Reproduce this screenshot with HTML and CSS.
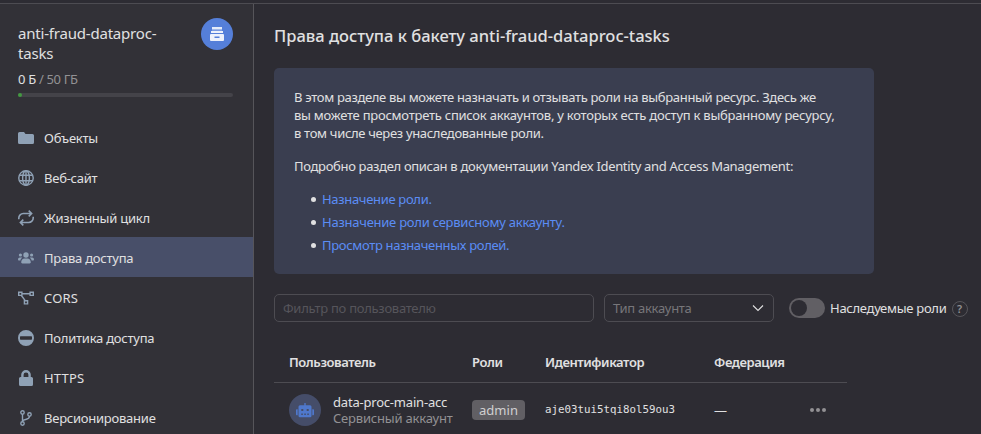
FILE: index.html
```html
<!DOCTYPE html>
<html lang="ru">
<head>
<meta charset="utf-8">
<title>Права доступа</title>
<link rel="stylesheet" href="styles.css">
</head>
<body>
<div class="app">
  <aside class="sidebar">
    <div class="bucket">
      <div class="bucket-head">
        <div class="bucket-name">anti-fraud-dataproc-<br>tasks</div>
        <div class="bucket-icon">
          <svg width="14" height="14" viewBox="0 0 14 14" fill="#fff"><path fill-opacity=".85" d="M2 0h10v2H2z"/><path fill-opacity=".45" d="M2 2h10v1.500H2z"/><path fill-opacity=".9" d="M1 4h12v2H1z"/><path fill-opacity=".9" fill-rule="evenodd" d="M1 7h12a1 1 0 0 1 1 1v5a1 1 0 0 1-1 1H1a1 1 0 0 1-1-1V8a1 1 0 0 1 1-1zm3.500 2.500v1.500h5V9.500z"/></svg>
        </div>
      </div>
      <div class="quota"><span>0 Б</span> / 50 ГБ</div>
      <div class="progress"><div class="progress-fill"></div></div>
    </div>
    <nav class="menu">
      <a class="item"><svg class="ico" viewBox="0 0 16 16"><path fill="currentColor" d="M1.500 2H6l1.500 2H14.500A1.500 1.500 0 0 1 16 5.500V12.500A1.500 1.500 0 0 1 14.500 14H1.500A1.500 1.500 0 0 1 0 12.500V3.500A1.500 1.500 0 0 1 1.500 2z"/></svg><span>Объекты</span></a>
      <a class="item"><svg class="ico line" viewBox="0 0 16 16"><circle cx="8" cy="8" r="7.250"/><ellipse cx="8" cy="8" rx="3.400" ry="7.250"/><path d="M8 .7v14.600M1.200 5.300h13.600M1.200 10.700h13.600"/></svg><span>Веб-сайт</span></a>
      <a class="item"><svg class="ico line thick" viewBox="0 0 16 16"><path d="M.8 9.200V8a4.500 4.500 0 0 1 4.500-4.500H13.500M10.700.7l2.900 2.800-2.900 2.800M15.200 6.800v1.200a4.500 4.500 0 0 1-4.500 4.500H2.500M5.300 9.700l-2.900 2.800 2.900 2.800"/></svg><span>Жизненный цикл</span></a>
      <a class="item active"><svg class="ico" viewBox="0 0 16 16" fill="currentColor"><circle cx="8" cy="5" r="2.700"/><circle cx="2.400" cy="5" r="1.600"/><circle cx="13.600" cy="5" r="1.600"/><path d="M3.200 12.300c0-2.400 1.600-3.800 3.300-3.800h3c1.700 0 3.300 1.400 3.300 3.800 0 .7-.4 1.100-1.100 1.100H4.300c-.7 0-1.100-.4-1.100-1.100zM0 9.500c0-1.300.8-2.100 1.800-2.100H3.200c.5 0 .8.1 1.100.4-1.100.6-1.700 1.500-1.900 2.700H.8C.3 10.500 0 10.100 0 9.500zM16 9.500c0-1.300-.8-2.100-1.800-2.100h-1.400c-.5 0-.8.1-1.100.4 1.100.6 1.700 1.500 1.900 2.700h1.600c.5 0 .8-.4.8-1z"/></svg><span>Права доступа</span></a>
      <a class="item latin"><svg class="ico line" viewBox="0 0 16 16"><path d="M.7 2.200h3.200v3.200H.7zM12.100 2.200h3.200v3.200h-3.200zM6.400 10.700h3.200v3.200H6.400zM4 3.800h8M3.400 5.500l3.800 5.200"/></svg><span>CORS</span></a>
      <a class="item"><svg class="ico" viewBox="0 0 16 16"><path fill="currentColor" fill-rule="evenodd" d="M8 0a8 8 0 1 1 0 16A8 8 0 0 1 8 0zM2.600 6.300a.6.6 0 0 0-.6.600v2.200c0 .3.300.6.600.6h10.800c.3 0 .6-.3.600-.6V6.900a.6.6 0 0 0-.6-.6z"/></svg><span>Политика доступа</span></a>
      <a class="item latin"><svg class="ico" viewBox="0 0 16 16"><path fill="currentColor" fill-rule="evenodd" d="M3.200 7V4.800a4.800 4.800 0 0 1 9.600 0V7h.7A1.500 1.500 0 0 1 15 8.500v6a1.500 1.500 0 0 1-1.500 1.500h-11A1.500 1.500 0 0 1 1 14.500v-6A1.500 1.500 0 0 1 2.500 7zm2.400 0h4.800V4.800a2.400 2.400 0 0 0-4.800 0z"/></svg><span>HTTPS</span></a>
      <a class="item"><svg class="ico line" viewBox="0 0 16 16"><circle cx="4.500" cy="2.500" r="1.700"/><circle cx="4.500" cy="13.500" r="1.700"/><circle cx="11.500" cy="4.500" r="1.700"/><path d="M4.500 4.300v7.400M11.500 6.300c0 4-5.500 2.500-7 4.700"/></svg><span>Версионирование</span></a>
    </nav>
  </aside>
  <main class="content">
    <h1 class="title">Права доступа к бакету anti-fraud-dataproc-tasks</h1>
    <section class="info">
      <p>В этом разделе вы можете назначать и отзывать роли на выбранный ресурс. Здесь же<br><span class="wide">вы можете просмотреть список аккаунтов, у которых есть доступ к выбранному ресурсу,</span><br>в том числе через унаследованные роли.</p>
      <p>Подробно раздел описан в документации Yandex Identity and Access Management:</p>
      <ul>
        <li><a>Назначение роли.</a></li>
        <li><a class="wide">Назначение роли сервисному аккаунту.</a></li>
        <li><a>Просмотр назначенных ролей.</a></li>
      </ul>
    </section>
    <div class="filters">
      <div class="field user-filter">Фильтр по пользователю</div>
      <div class="field type-filter"><span>Тип аккаунта</span><svg width="12" height="8" viewBox="0 0 12 8"><path d="M1 1.500l5 5 5-5" fill="none" stroke="#e0e0e1" stroke-width="1.100"/></svg></div>
      <div class="switch"><div class="knob"></div></div>
      <span class="switch-label">Наследуемые роли</span>
      <div class="help">?</div>
    </div>
    <div class="table">
      <div class="row head">
        <div>Пользователь</div><div>Роли</div><div>Идентификатор</div><div>Федерация</div><div></div>
      </div>
      <div class="row body">
        <div class="user">
          <div class="avatar"><svg width="18" height="15" viewBox="0 0 18 15"><path fill="#4f78cc" fill-rule="evenodd" d="M8.300 0h1.400v2.200H14a1.500 1.500 0 0 1 1.500 1.500v9A1.500 1.500 0 0 1 14 14.200H4a1.500 1.500 0 0 1-1.500-1.500v-9A1.500 1.500 0 0 1 4 2.200h4.300zM5.300 6v2h2V6zm5.400 0v2h2V6zM5.300 10.500v1.500h1.500v-1.500zm3 0v1.500h1.500v-1.500zm3 0v1.500h1.500v-1.500zM0 7.200c0-.6.4-1 1-1h.7v6H1c-.6 0-1-.4-1-1zM18 7.200c0-.6-.4-1-1-1h-.7v6h.7c.6 0 1-.4 1-1z"/></svg></div>
          <div class="who"><div class="uname">data-proc-main-acc</div><div class="utype">Сервисный аккаунт</div></div>
        </div>
        <div><span class="tag">admin</span></div>
        <div class="mono">aje03tui5tqi8ol59ou3</div>
        <div class="dash">—</div>
        <div class="more"><svg width="16" height="4" viewBox="0 0 16 4" fill="#929194"><circle cx="2" cy="2" r="2"/><circle cx="8" cy="2" r="2"/><circle cx="14" cy="2" r="2"/></svg></div>
      </div>
    </div>
  </main>
</div>
</body>
</html>
```
FILE: styles.css
```css
* { box-sizing: border-box; }
body {
  margin: 0;
  background: #2d2c33;
  color: #e0e0e1;
  font-family: "Noto Sans", sans-serif;
  font-size: 13px;
  line-height: 18px;
  overflow: hidden;
}
.app {
  display: flex;
  height: 431px;
  margin-top: 3px;
  border-top: 1px solid #4d4c52;
  overflow: hidden;
}
.sidebar {
  flex: none;
  width: 254px;
  background: #323137;
  border-right: 1px solid #56555a;
}
.bucket { height: 113px; padding: 14px 20px 0 18px; }
.bucket-head { display: flex; justify-content: space-between; }
.bucket-name { padding-top: 5px; font-size: 15px; line-height: 20px; letter-spacing: -.2px; }
.bucket-icon {
  display: flex;
  align-items: center;
  justify-content: center;
  width: 32px;
  height: 32px;
  border-radius: 50%;
  background: #557fd9;
}
.quota { margin-top: 7px; color: #929194; line-height: 18px; letter-spacing: -.32px; }
.quota span { color: #e0e0e1; }
.progress { height: 4px; margin-top: 5px; border-radius: 2px; background: #444349; }
.progress-fill { width: 4px; height: 4px; border-radius: 2px; background: #439a41; }
.item {
  display: flex;
  align-items: center;
  gap: 10px;
  height: 40px;
  padding: 2px 0 0 18px;
  letter-spacing: -.24px;
}
.item.latin { letter-spacing: .2px; }
.item.active { background: #484f69; }
.ico { width: 16px; height: 16px; color: #8fa1b5; margin-top: -1px; }
.line { fill: none; stroke: currentColor; stroke-width: 1.400; }
.thick { stroke-width: 1.600; }
.content { flex: 1; min-width: 0; padding: 0 0 0 20px; }
.title { margin: 20px 0 20px; font-size: 16.500px; line-height: 24px; font-weight: 500; white-space: nowrap; }
.info {
  width: 600px;
  height: 206px;
  padding: 20px 20px 0;
  border-radius: 5px;
  background: #3a3e50;
  letter-spacing: -.32px;
  white-space: nowrap;
}
.info p { margin: 0 0 15px; }
.info .wide { letter-spacing: -.245px; }
.info ul { margin: 0; padding: 0; list-style: none; }
.info li { display: flex; align-items: center; height: 18px; margin-bottom: 5px; }
.info li::before {
  content: "";
  width: 5px;
  height: 5px;
  margin: 1px 6px 0 17px;
  border-radius: 50%;
  background: #e0e0e1;
}
.info a { color: #5b8df5; }
.filters { display: flex; align-items: center; height: 28px; margin-top: 20px; letter-spacing: -.28px; }
.field {
  display: flex;
  align-items: center;
  justify-content: space-between;
  height: 28px;
  padding: 0 9px 1px 8px;
  border: 1px solid #4d4c52;
  border-radius: 5px;
  white-space: nowrap;
}
.user-filter { width: 320px; color: #56555b; }
.type-filter { width: 170px; margin-left: 10px; color: #77767a; }
.type-filter svg { margin-top: 1px; }
.switch { width: 36px; height: 20px; margin-left: 15px; padding: 2px; border-radius: 10px; background: #615f64; }
.knob { width: 16px; height: 16px; border-radius: 50%; background: #2d2c33; }
.switch-label { margin-left: 5px; white-space: nowrap; }
.help {
  width: 16px;
  height: 16px;
  margin: 1px 0 0 5px;
  border: 1px solid #56555a;
  border-radius: 50%;
  color: #929194;
  font-size: 11px;
  font-weight: 600;
  line-height: 14px;
  text-align: center;
}
.table { width: 573px; margin-top: 20px; }
.row { display: grid; grid-template-columns: 183px 73px 169px 96px 1fr; align-items: center; padding-left: 15px; white-space: nowrap; }
.head { height: 41px; border-bottom: 1px solid #4d4c52; font-weight: 600; letter-spacing: -.42px; }
.body { height: 54px; }
.user { display: flex; align-items: center; gap: 12px; }
.avatar {
  display: flex;
  align-items: center;
  justify-content: center;
  width: 32px;
  height: 32px;
  border-radius: 50%;
  background: #454d69;
}
.who { line-height: 16px; letter-spacing: -.2px; }
.tag {
  display: block;
  width: 53px;
  height: 20px;
  border-radius: 4px;
  background: #615f64;
  color: #d0cfd1;
  line-height: 20px;
  text-align: center;
}
.utype { color: #929194; }
.mono { font-family: "DejaVu Sans Mono", monospace; font-size: 10.800px; }
.more { display: flex; }
```
